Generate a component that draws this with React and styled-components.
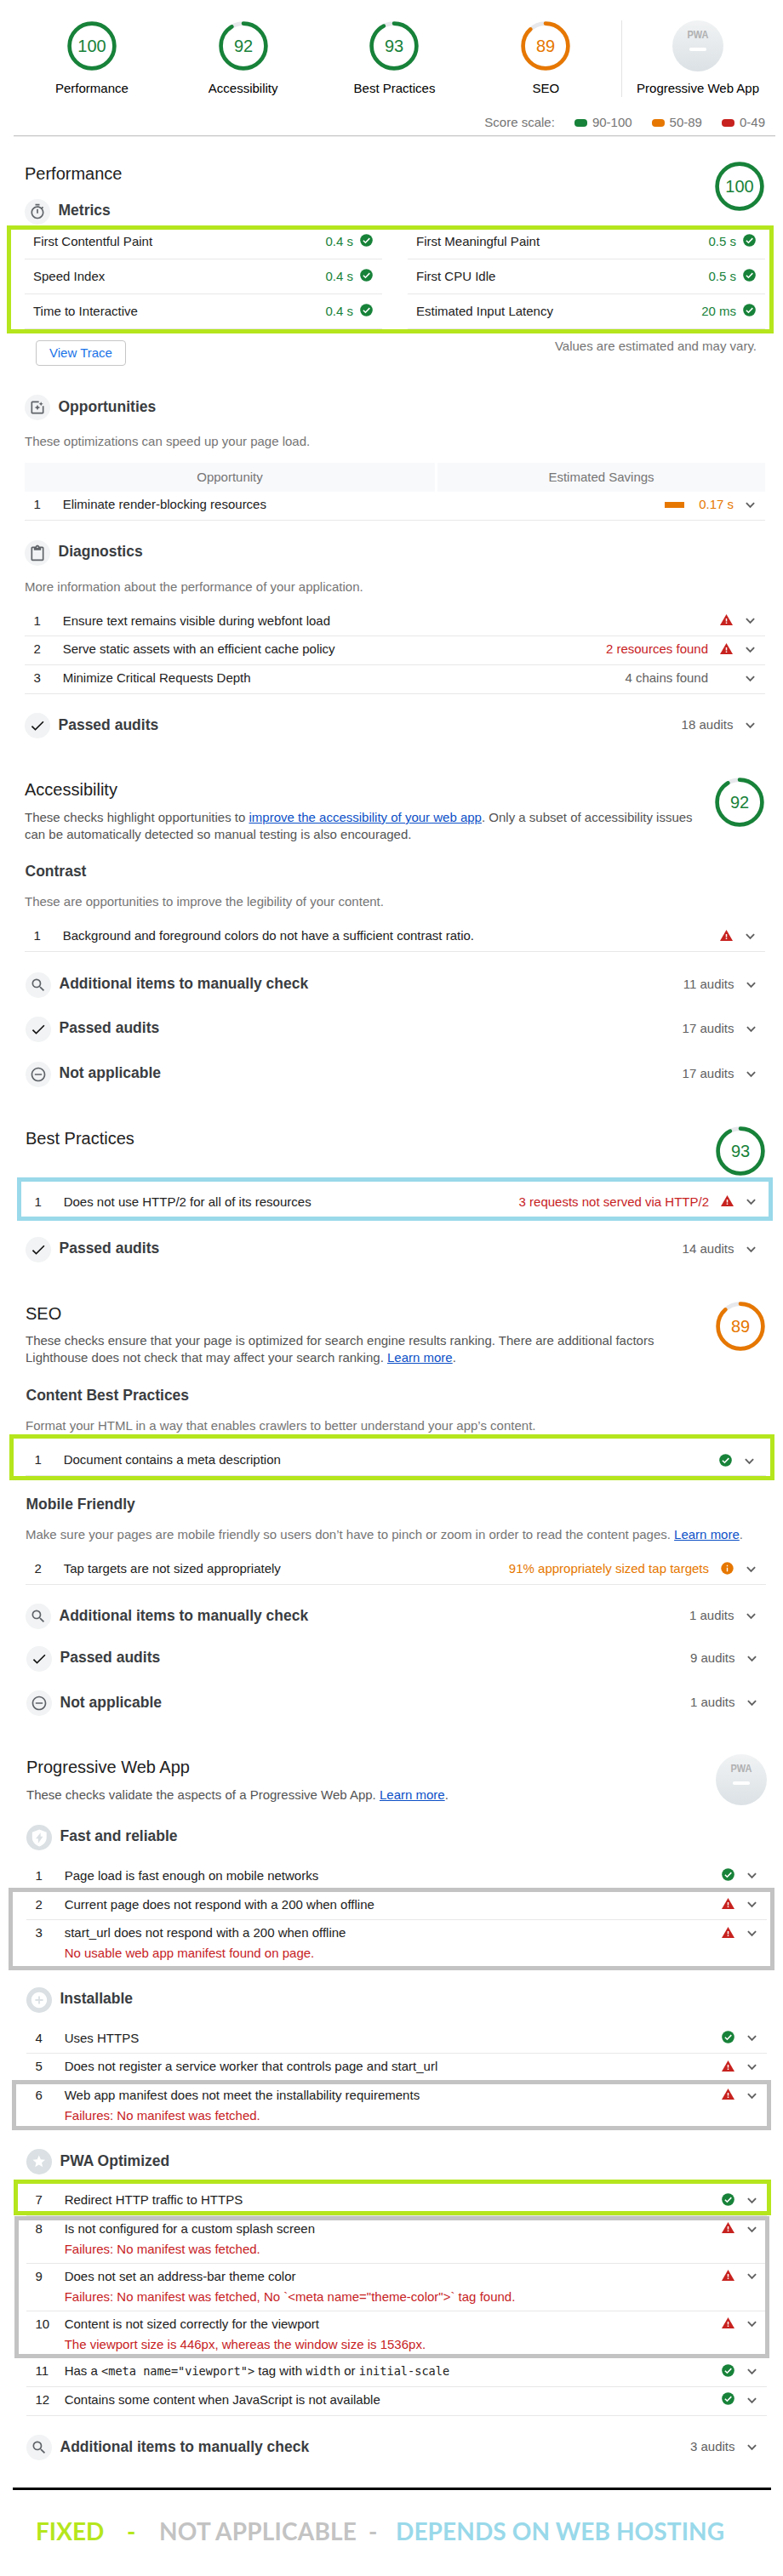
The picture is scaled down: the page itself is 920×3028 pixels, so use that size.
import React from 'react';
import styled, { createGlobalStyle } from 'styled-components';

const C = {
  green: '#178239', orange: '#e67700', red: '#c7221f',
  lime: '#b5e61d', gray: '#c3c3c3', blue: '#99d9ea',
};

const Global = createGlobalStyle`
  body { margin: 0; background: #fff; }
  * { box-sizing: border-box; }
`;

const Page = styled.div`
  width: 920px;
  height: 3028px;
  overflow: hidden;
  font: 15px/20px "Liberation Sans", Arial, sans-serif;
  color: #212121;
  white-space: nowrap;
`;

const Column = styled.div`
  width: 870px;
  margin-left: ${p => p.$left}px;
  display: flex;
  flex-direction: column;
`;

const ScoreHeader = styled.header`
  display: flex;
  height: 134px;
  padding: 24px 11px 0 19px;
`;
const ScoreCell = styled.div`
  flex: 1;
  height: 90px;
  display: flex;
  flex-direction: column;
  align-items: center;
  gap: 10px;
  color: #000;
  border-left: ${p => (p.$divided ? '1px solid #e3e3e3' : '0')};
`;

const Scale = styled.div`
  display: flex;
  justify-content: flex-end;
  align-items: flex-start;
  width: 895px;
  height: 26px;
  margin: 0 0 1px 16px;
  padding-right: 12px;
  border-bottom: 1px solid #c8c8c8;
  box-shadow: 0 1px #eee;
  color: #757575;
`;
const ScaleItem = styled.span`
  display: flex;
  margin-left: 23px;
`;
const Pill = styled.i`
  width: 15px;
  height: 9px;
  margin: 6px 6px 0 0;
  border-radius: 4px;
  background: ${p => p.$color};
`;

const CategoryHead = styled.div`
  display: flex;
  justify-content: space-between;
  height: ${p => p.$h}px;
  margin-top: ${p => p.$mt}px;
`;
const Title = styled.h1`
  margin: 3px 0 ${p => p.$gap ?? 11}px;
  font-size: 20px;
  line-height: 24px;
  font-weight: 400;
`;
const Description = styled.p`
  margin: 0;
  color: ${p => (p.$light ? '#757575' : '#545454')};
  height: ${p => (p.$h ? p.$h + 'px' : 'auto')};
`;
const Link = styled.a`
  color: #0c50c7;
  text-decoration: underline;
`;

const GroupHead = styled.div`
  display: flex;
  height: ${p => p.$h ?? 30}px;
  margin-top: ${p => p.$mt ?? 0}px;
`;
const GroupTitle = styled.h2`
  flex: 1;
  margin: ${p => p.$dy ?? 0}px 0 0 ${p => (p.$plain ? 0.5 : 9.5)}px;
  font-size: 17.5px;
  line-height: 26px;
  font-weight: 700;
  color: #3a3d41;
`;
const IconDisc = styled.span`
  width: 30px;
  height: 30px;
  border-radius: 50%;
  background: ${p => (p.$pwa ? '#dae0e3' : '#f1f3f4')};
  display: flex;
  align-items: center;
  justify-content: center;
`;
const AuditCount = styled.span`
  margin: 4px 14.5px 0 0;
  color: #616161;
`;
const ChevronBox = styled.span`
  width: 11px;
  height: 8px;
  margin: ${p => p.$top}px 12px 0 0;
  display: flex;
`;

const Metrics = styled.div`
  display: grid;
  grid-template-columns: 420px 420px;
  column-gap: 30px;
`;
const Metric = styled.div`
  display: flex;
  height: 41px;
  padding: 10px 11px 0 10px;
  border-bottom: 1px solid #e8e8e8;
`;
const MetricName = styled.span`
  flex: 1;
`;
const MetricValue = styled.span`
  margin-right: 8px;
  color: ${C.green};
`;
const MetricIcon = styled.span`
  margin-top: 1px;
  height: 15px;
  display: flex;
`;
const MetricsFooter = styled.div`
  display: flex;
  justify-content: space-between;
  align-items: flex-start;
  height: 67px;
  margin-top: 10px;
  padding: 0 10px 0 13px;
  color: #757575;
`;
const TraceButton = styled.button`
  width: 106px;
  height: 30px;
  margin-top: 3px;
  padding: 0;
  border: 1px solid #c6c6c6;
  border-radius: 4px;
  background: #fff;
  color: #1a73e8;
  font: inherit;
`;

const TableHead = styled.div`
  display: grid;
  grid-template-columns: 482px 385px;
  column-gap: 3px;
  height: 34px;
  line-height: 34px;
  color: #757575;
  text-align: center;
`;
const TableHeadCell = styled.span`
  background: #f8f9fb;
`;

const Row = styled.div`
  display: flex;
  height: ${p => p.$h}px;
  padding-right: ${p => p.$shift}px;
  border-bottom: 1px solid #e8e8e8;
`;
const Index = styled.span`
  width: 44.7px;
  padding: ${p => p.$pt}px 0 0 10.5px;
`;
const RowText = styled.div`
  flex: 1;
  padding-top: ${p => p.$pt}px;
`;
const RowError = styled.div`
  margin-top: 4px;
  color: ${C.red};
`;
const RowValue = styled.span`
  padding-top: ${p => p.$pt}px;
  margin-right: 14px;
  color: ${p => p.$color};
`;
const RowIcon = styled.span`
  width: 15px;
  height: 15px;
  margin: ${p => p.$top}px 15px 0 0;
  display: flex;
`;
const SavingsBar = styled.i`
  width: 23px;
  height: 7px;
  margin: 12px 17px 0 0;
  background: ${C.orange};
`;
const Savings = styled.span`
  padding-top: 5px;
  margin-right: 14px;
  color: ${C.orange};
`;
const Code = styled.code`
  font: 13.6px/20px "DejaVu Sans Mono", "Liberation Mono", monospace;
`;

const Marked = styled.div`
  position: relative;
`;
const Frame = styled.span`
  position: absolute;
  inset: ${p => p.$inset};
  border: 5px solid ${p => p.$color};
  pointer-events: none;
`;

const Rule = styled.hr`
  width: 891px;
  height: 3px;
  margin: 32px 0 0 15px;
  border: 0;
  background: #000;
`;
const Legend = styled.footer`
  display: flex;
  margin: 28px 0 0 42px;
  font: 700 28px/40px Lato, Carlito, sans-serif;
`;
const LegendText = styled.span`
  width: ${p => p.$w}px;
  color: ${p => p.$color};
  letter-spacing: ${p => p.$ls ?? 0}px;
`;

function Gauge({ score }) {
  const color = score >= 90 ? C.green : C.orange;
  const r = 26.4;
  const len = 2 * Math.PI * r;
  return (
    <svg width="60" height="60" viewBox="0 0 60 60">
      <circle cx="30" cy="30" r={r} fill="none" stroke="#e6e8eb" strokeWidth="4.6" />
      <circle cx="30" cy="30" r={r} fill="none" stroke={color} strokeWidth="4.6" strokeLinecap={score < 100 ? 'round' : 'butt'}
        strokeDasharray={score < 100 ? `${(len * score) / 100 - 2} ${len}` : undefined} transform="rotate(-90 30 30)" />
      <text x="30" y="37" textAnchor="middle" fontSize="20" fill={color}>{score}</text>
    </svg>
  );
}

function PwaGauge() {
  return (
    <svg width="60" height="60" viewBox="0 0 60 60">
      <defs>
        <linearGradient id="pwa" x1="0" y1="0" x2="0" y2="1">
          <stop offset="0" stopColor="#f1f3f4" />
          <stop offset="1" stopColor="#dbe1e5" />
        </linearGradient>
      </defs>
      <circle cx="30" cy="30" r="30" fill="url(#pwa)" />
      <text x="17.5" y="21" fontSize="12.5" fontWeight="700" fill="#b0b1b2" textLength="25" lengthAdjust="spacingAndGlyphs">PWA</text>
      <rect x="20" y="32" width="20" height="4" rx="1.8" fill="#fff" />
    </svg>
  );
}

const Chevron = () => (
  <svg width="11" height="8" viewBox="0 0 11 8"><path d="M.9 1.2l4.6 4.7 4.6-4.7" fill="none" stroke="#616161" strokeWidth="1.9" /></svg>
);
const Pass = () => (
  <svg width="15" height="15" viewBox="0 0 15 15"><circle cx="7.5" cy="7.5" r="7.3" fill={C.green} /><path d="M3.9 7.7l2.5 2.5 4.9-5.1" fill="none" stroke="#fff" strokeWidth="1.6" /></svg>
);
const Warn = () => (
  <svg width="15" height="15" viewBox="0 0 15 15"><path d="M7.5 1L15 14H0z" fill={C.red} /><path d="M7.5 6v3.5M7.5 10.6v1.5" stroke="#fff" strokeWidth="1.5" /></svg>
);
const Info = () => (
  <svg width="15" height="15" viewBox="0 0 15 15"><circle cx="7.5" cy="7.5" r="7.2" fill={C.orange} /><path d="M7.5 3.8v1.5M7.5 6.7v4.5" stroke="#fff" strokeWidth="1.4" /></svg>
);
const statusIcons = { pass: Pass, warn: Warn, info: Info };

const material = {
  metrics: 'M15 1H9v2h6V1zm-4 13h2V8h-2v6zm8.03-6.61l1.42-1.42c-.43-.51-.9-.99-1.41-1.41l-1.42 1.42C16.07 4.74 14.12 4 12 4c-4.97 0-9 4.03-9 9s4.02 9 9 9 9-4.03 9-9c0-2.12-.74-4.07-1.97-5.61zM12 20c-3.87 0-7-3.13-7-7s3.13-7 7-7 7 3.13 7 7-3.13 7-7 7z',
  opportunities: 'M19.02 10v9H5V5h9V3H5.02c-1.1 0-2 .9-2 2v14c0 1.1.9 2 2 2H19c1.1 0 2-.9 2-2v-9h-1.98zM17 10l.94-2.06L20 7l-2.06-.94L17 4l-.94 2.06L14 7l2.06.94zm-3.75.75L12 8l-1.25 2.75L8 12l2.75 1.25L12 16l1.25-2.75L16 12z',
  diagnostics: 'M19 3h-4.18C14.4 1.84 13.3 1 12 1c-1.3 0-2.4.84-2.82 2H5c-1.1 0-2 .9-2 2v16c0 1.1.9 2 2 2h14c1.1 0 2-.9 2-2V5c0-1.1-.9-2-2-2zm-7 0c.55 0 1 .45 1 1s-.45 1-1 1-1-.45-1-1 .45-1 1-1zm7 18H5V5h2v3h10V5h2v16z',
  passed: 'M9 16.17L4.83 12l-1.42 1.41L9 19 21 7l-1.41-1.41z',
  manual: 'M15.5 14h-.79l-.28-.27A6.471 6.471 0 0 0 16 9.5 6.5 6.5 0 1 0 9.5 16c1.61 0 3.09-.59 4.23-1.57l.27.28v.79l5 4.99L20.49 19l-4.99-5zm-6 0C7.01 14 5 11.99 5 9.5S7.01 5 9.5 5 14 7.01 14 9.5 11.99 14 9.5 14z',
  na: 'M7 11v2h10v-2H7zm5-9C6.48 2 2 6.48 2 12s4.48 10 10 10 10-4.48 10-10S17.52 2 12 2zm0 18c-4.41 0-8-3.59-8-8s3.59-8 8-8 8 3.59 8 8-3.59 8-8 8z',
  fast: 'M12 1.5L3 5v7c0 5 3.8 9 9 10.8 5.2-1.8 9-5.8 9-10.8V5zM13.5 5.5v5h3l-6 8.5v-6h-3z',
  installable: 'M12 2C6.48 2 2 6.48 2 12s4.48 10 10 10 10-4.48 10-10S17.52 2 12 2zm5 11h-4v4h-2v-4H7v-2h4V7h2v4h4v2z',
  optimized: 'M12 17.27L18.18 21l-1.64-7.03L22 9.24l-7.19-.61L12 2 9.19 8.63 2 9.24l5.46 4.73L5.82 21z',
};
const pwaSizes = { fast: 22.5, installable: 22, optimized: 17.5 };

function GroupIcon({ name }) {
  const pwa = name in pwaSizes;
  const size = pwa ? pwaSizes[name] : 20;
  const fill = pwa ? '#fff' : name === 'passed' ? '#111' : '#5f6368';
  return (
    <IconDisc $pwa={pwa}>
      <svg width={size} height={size} viewBox="0 0 24 24"><path d={material[name]} fill={fill} fillRule="evenodd" /></svg>
    </IconDisc>
  );
}

function Group({ icon, title, count, h, mt, dy }) {
  return (
    <GroupHead $h={h} $mt={mt}>
      {icon && <GroupIcon name={icon} />}
      <GroupTitle $dy={dy} $plain={!icon}>{title}</GroupTitle>
      {count && <AuditCount>{count} audits</AuditCount>}
      {count && <ChevronBox $top={11}><Chevron /></ChevronBox>}
    </GroupHead>
  );
}

function Audit({ n, title, value, color = C.red, status, error, h = 34, pt = 5, iconTop = 7, chevTop = 12, shift = 0, savings }) {
  const Status = statusIcons[status];
  return (
    <Row $h={h} $shift={shift}>
      <Index $pt={pt}>{n}</Index>
      <RowText $pt={pt}>{title}{error && <RowError>{error}</RowError>}</RowText>
      {savings && <SavingsBar />}
      {savings && <Savings>{savings}</Savings>}
      {value && <RowValue $pt={pt} $color={color}>{value}</RowValue>}
      {!savings && <RowIcon $top={iconTop}>{Status && <Status />}</RowIcon>}
      <ChevronBox $top={chevTop}><Chevron /></ChevronBox>
    </Row>
  );
}

const metrics = [
  ['First Contentful Paint', '0.4 s'], ['First Meaningful Paint', '0.5 s'],
  ['Speed Index', '0.4 s'], ['First CPU Idle', '0.5 s'],
  ['Time to Interactive', '0.4 s'], ['Estimated Input Latency', '20 ms'],
];

export default function App() {
  return (
    <Page>
      <Global />
      <ScoreHeader>
        <ScoreCell><Gauge score={100} />Performance</ScoreCell>
        <ScoreCell><Gauge score={92} />Accessibility</ScoreCell>
        <ScoreCell><Gauge score={93} />Best Practices</ScoreCell>
        <ScoreCell><Gauge score={89} />SEO</ScoreCell>
        <ScoreCell $divided><PwaGauge />Progressive Web App</ScoreCell>
      </ScoreHeader>
      <Scale>
        Score scale:
        <ScaleItem><Pill $color={C.green} />90-100</ScaleItem>
        <ScaleItem><Pill $color={C.orange} />50-89</ScaleItem>
        <ScaleItem><Pill $color={C.red} />0-49</ScaleItem>
      </Scale>

      <Column $left={29}>
        <CategoryHead $mt={28} $h={45}><Title>Performance</Title><Gauge score={100} /></CategoryHead>
        <Group icon="metrics" title="Metrics" />
        <Marked>
          <Metrics>
            {metrics.map(([name, value]) => (
              <Metric key={name}><MetricName>{name}</MetricName><MetricValue>{value}</MetricValue><MetricIcon><Pass /></MetricIcon></Metric>
            ))}
          </Metrics>
          <Frame $color={C.lime} $inset="1px -10px -5px -21px" />
        </Marked>
        <MetricsFooter><TraceButton>View Trace</TraceButton>Values are estimated and may vary.</MetricsFooter>

        <Group icon="opportunities" title="Opportunities" h={45} dy={1} />
        <Description $light $h={35}>These optimizations can speed up your page load.</Description>
        <TableHead><TableHeadCell>Opportunity</TableHeadCell><TableHeadCell>Estimated Savings</TableHeadCell></TableHead>
        <Audit n="1" title="Eliminate render-blocking resources" savings="0.17 s" />

        <Group icon="diagnostics" title="Diagnostics" h={45} mt={23} />
        <Description $light $h={34}>More information about the performance of your application.</Description>
        <Audit n="1" title="Ensure text remains visible during webfont load" status="warn" pt={6} />
        <Audit n="2" title="Serve static assets with an efficient cache policy" value="2 resources found" status="warn" />
        <Audit n="3" title="Minimize Critical Requests Depth" value="4 chains found" color="#616161" />
        <Group icon="passed" title="Passed audits" count="18" mt={22} dy={1} />

        <CategoryHead $mt={45} $h={98}>
          <div>
            <Title>Accessibility</Title>
            <Description>
              These checks highlight opportunities to <Link>improve the accessibility of your web app</Link>. Only a subset of accessibility issues<br />
              can be automatically detected so manual testing is also encouraged.
            </Description>
          </div>
          <Gauge score={92} />
        </CategoryHead>
        <Group title="Contrast" h={39} />
        <Description $light $h={35}>These are opportunities to improve the legibility of your content.</Description>
        <Audit n="1" title="Background and foreground colors do not have a sufficient contrast ratio." status="warn" />
      </Column>

      <Column $left={30}>
        <Group icon="manual" title="Additional items to manually check" count="11" mt={24} h={52} />
        <Group icon="passed" title="Passed audits" count="17" h={53} />
        <Group icon="na" title="Not applicable" count="17" />

        <CategoryHead $mt={45} $h={75}><Title>Best Practices</Title><Gauge score={93} /></CategoryHead>
        <Marked>
          <Audit n="1" title="Does not use HTTP/2 for all of its resources" value="3 requests not served via HTTP/2" status="warn" iconTop={6} chevTop={11} />
          <Frame $color={C.blue} $inset="-14px -8px -3px -10px" />
        </Marked>
        <Group icon="passed" title="Passed audits" count="14" mt={22} />

        <CategoryHead $mt={45} $h={98}>
          <div>
            <Title $gap={10}>SEO</Title>
            <Description>
              These checks ensure that your page is optimized for search engine results ranking. There are additional factors<br />
              Lighthouse does not check that may affect your search ranking. <Link>Learn more</Link>.
            </Description>
          </div>
          <Gauge score={89} />
        </CategoryHead>
        <Group title="Content Best Practices" h={39} />
        <Description $light $h={35}>Format your HTML in a way that enables crawlers to better understand your app’s content.</Description>
        <Marked>
          <Audit n="1" title="Document contains a meta description" status="pass" shift={2} iconTop={8} chevTop={13} />
          <Frame $color={C.lime} $inset="-15px -10px -5px -19px" />
        </Marked>
        <Group title="Mobile Friendly" mt={20} h={39} />
        <Description $light $h={35}>Make sure your pages are mobile friendly so users don’t have to pinch or zoom in order to read the content pages. <Link>Learn more</Link>.</Description>
        <Audit n="2" title="Tap targets are not sized appropriately" value="91% appropriately sized tap targets" color={C.orange} status="info" />
        <Group icon="manual" title="Additional items to manually check" count="1" mt={22} h={50} dy={1} />
      </Column>

      <Column $left={31}>
        <Group icon="passed" title="Passed audits" count="9" h={52} />
        <Group icon="na" title="Not applicable" count="1" dy={1} />

        <CategoryHead $mt={45} $h={83}>
          <div>
            <Title>Progressive Web App</Title>
            <Description>These checks validate the aspects of a Progressive Web App. <Link>Learn more</Link>.</Description>
          </div>
          <PwaGauge />
        </CategoryHead>
        <Group icon="fast" title="Fast and reliable" h={44} />
        <Audit n="1" title="Page load is fast enough on mobile networks" status="pass" pt={6} />
        <Marked>
          <Audit n="2" title="Current page does not respond with a 200 when offline" status="warn" pt={6} />
          <Audit n="3" title="start_url does not respond with a 200 when offline" status="warn" h={56} error="No usable web app manifest found on page." />
          <Frame $color={C.gray} $inset="-4px -9px -3px -21px" />
        </Marked>

        <Group icon="installable" title="Installable" mt={23} h={44} />
        <Audit n="4" title="Uses HTTPS" status="pass" pt={6} />
        <Audit n="5" title="Does not register a service worker that controls page and start_url" status="warn" />
        <Marked>
          <Audit n="6" title="Web app manifest does not meet the installability requirements" status="warn" h={56} iconTop={6} error="Failures: No manifest was fetched." />
          <Frame $color={C.gray} $inset="-3px -5px 0 -17px" />
        </Marked>

        <Group icon="optimized" title="PWA Optimized" mt={22} h={45} dy={1} />
        <Marked>
          <Audit n="7" title="Redirect HTTP traffic to HTTPS" status="pass" />
          <Frame $color={C.lime} $inset="-9px -5px 1px -15px" />
        </Marked>
        <Marked>
          <Audit n="8" title="Is not configured for a custom splash screen" status="warn" h={56} iconTop={6} error="Failures: No manifest was fetched." />
          <Audit n="9" title="Does not set an address-bar theme color" status="warn" h={56} iconTop={6} chevTop={11} error={'Failures: No manifest was fetched, No `<meta name="theme-color">` tag found.'} />
          <Audit n="10" title="Content is not sized correctly for the viewport" status="warn" h={55} iconTop={6} chevTop={11} error="The viewport size is 446px, whereas the window size is 1536px." />
          <Frame $color={C.gray} $inset="0 -3px 0 -14px" />
        </Marked>
        <Audit n="11" title={<>Has a <Code>{'<meta name="viewport">'}</Code> tag with <Code>width</Code> or <Code>initial-scale</Code></>} status="pass" />
        <Audit n="12" title="Contains some content when JavaScript is not available" status="pass" iconTop={6} />
        <Group icon="manual" title="Additional items to manually check" count="3" mt={22} dy={1} />
      </Column>

      <Rule />
      <Legend>
        <LegendText $color={C.lime} $w={107}>FIXED</LegendText>
        <LegendText $color={C.lime} $w={38}>-</LegendText>
        <LegendText $color={C.gray} $w={246} $ls={0.2}>NOT APPLICABLE</LegendText>
        <LegendText $color={C.gray} $w={32}>-</LegendText>
        <LegendText $color={C.blue} $w={400} $ls={0.1}>DEPENDS ON WEB HOSTING</LegendText>
      </Legend>
    </Page>
  );
}
